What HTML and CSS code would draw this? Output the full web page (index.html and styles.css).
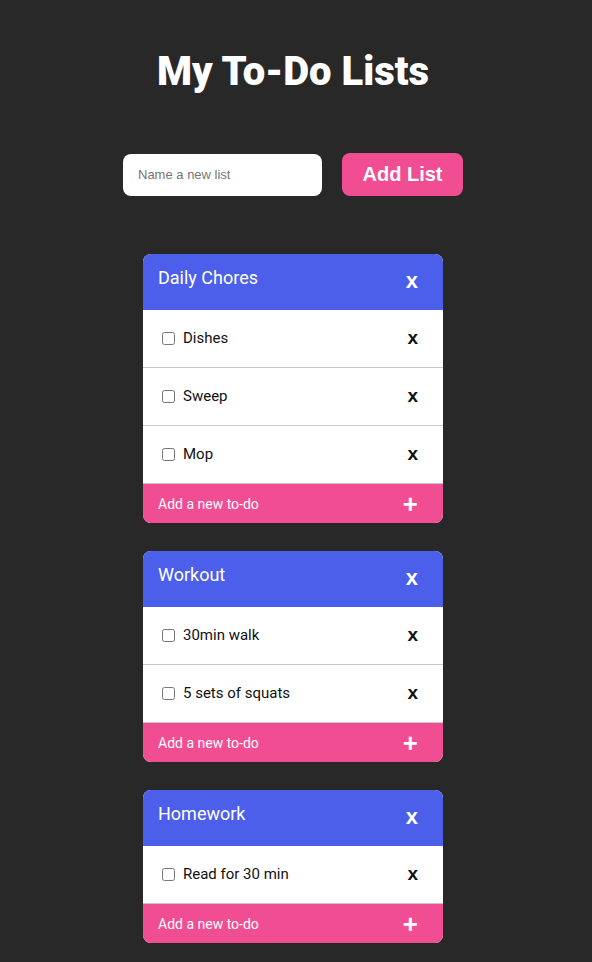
FILE: index.html
```html
<!DOCTYPE html>
<html>
<head>
<meta charset="utf-8">
<link rel="stylesheet" href="styles.css">
</head>
<body>
<div class="app">
  <h1 class="title">My To-Do Lists</h1>
  <form class="new-list">
    <input class="new-list-input" type="text" placeholder="Name a new list">
    <button class="add-list-btn" type="button">Add List</button>
  </form>
  <div class="lists">
    <section class="card">
      <header class="card-head"><h2 class="card-title">Daily Chores</h2><span class="card-del">x</span></header>
      <div class="row"><label class="item"><input type="checkbox" class="check"><span>Dishes</span></label><span class="row-del">x</span></div>
      <div class="row"><label class="item"><input type="checkbox" class="check"><span>Sweep</span></label><span class="row-del">x</span></div>
      <div class="row"><label class="item"><input type="checkbox" class="check"><span>Mop</span></label><span class="row-del">x</span></div>
      <footer class="card-foot"><span>Add a new to-do</span><span class="plus">+</span></footer>
    </section>
    <section class="card">
      <header class="card-head"><h2 class="card-title">Workout</h2><span class="card-del">x</span></header>
      <div class="row"><label class="item"><input type="checkbox" class="check"><span>30min walk</span></label><span class="row-del">x</span></div>
      <div class="row"><label class="item"><input type="checkbox" class="check"><span>5 sets of squats</span></label><span class="row-del">x</span></div>
      <footer class="card-foot"><span>Add a new to-do</span><span class="plus">+</span></footer>
    </section>
    <section class="card">
      <header class="card-head"><h2 class="card-title">Homework</h2><span class="card-del">x</span></header>
      <div class="row"><label class="item"><input type="checkbox" class="check"><span>Read for 30 min</span></label><span class="row-del">x</span></div>
      <footer class="card-foot"><span>Add a new to-do</span><span class="plus">+</span></footer>
    </section>
  </div>
</div>
</body>
</html>
```
FILE: styles.css
```css
html, body {
  margin: 0;
  padding: 0;
  background: #282828;
}
body {
  font-family: Roboto, "Liberation Sans", sans-serif;
  color: #fff;
}
.app {
  width: 586px;
  display: flex;
  flex-direction: column;
  align-items: center;
  padding-top: 49px;
}
.title {
  margin: 0;
  font-family: Roboto, sans-serif;
  font-weight: 900;
  font-size: 40px;
  line-height: 46px;
  color: #fff;
}
.new-list {
  margin-top: 58px;
  display: flex;
  align-items: center;
  gap: 20px;
}
.new-list-input {
  box-sizing: border-box;
  width: 199px;
  height: 42px;
  border: none;
  border-radius: 8px;
  padding: 0 15px;
  font-family: "Liberation Sans", Arial, sans-serif;
  font-size: 13px;
  color: #333;
  background: #fff;
  outline: none;
}
.new-list-input::placeholder {
  color: #757575;
}
.add-list-btn {
  box-sizing: border-box;
  width: 121px;
  height: 43px;
  border: none;
  border-radius: 8px;
  background: #f14d93;
  color: #fff;
  font-family: "Liberation Sans", Arial, sans-serif;
  font-weight: 700;
  font-size: 20px;
  padding: 0;
}
.lists {
  margin-top: 58px;
  display: flex;
  flex-direction: column;
  gap: 28px;
  padding-bottom: 19px;
}
.card {
  width: 300px;
  border-radius: 8px;
  overflow: hidden;
  background: #fff;
}
.card-head {
  height: 56px;
  box-sizing: border-box;
  background: #4c5fea;
  display: flex;
  justify-content: space-between;
  align-items: flex-start;
  padding: 0 25px 0 15px;
}
.card-title {
  margin: 0;
  padding-top: 12px;
  font-family: Roboto, sans-serif;
  font-weight: 400;
  font-size: 18px;
  line-height: 24px;
  color: #fff;
}
.card-del {
  padding-top: 14px;
  font-family: "Liberation Sans", Arial, sans-serif;
  font-weight: 700;
  font-size: 22px;
  line-height: 26px;
  color: #fff;
}
.row {
  height: 58px;
  box-sizing: border-box;
  border-bottom: 1px solid #c8c8c8;
  display: flex;
  align-items: center;
  justify-content: space-between;
  padding: 0 25px 1px 15px;
  color: #111;
}
.item {
  display: flex;
  align-items: center;
  font-family: Roboto, sans-serif;
  font-size: 15px;
}
.check {
  width: 13px;
  height: 13px;
  margin: 0 8px 0 4px;
}
.row-del {
  font-family: "Liberation Sans", Arial, sans-serif;
  font-weight: 700;
  font-size: 19px;
  color: #111;
}
.card-foot {
  height: 39px;
  box-sizing: border-box;
  background: #f14d93;
  display: flex;
  align-items: center;
  justify-content: space-between;
  padding: 0 25px 0 15px;
  font-family: Roboto, sans-serif;
  font-size: 14px;
  color: #fff;
}
.plus {
  font-family: "Liberation Sans", Arial, sans-serif;
  font-weight: 700;
  font-size: 26px;
  line-height: 26px;
}
```
